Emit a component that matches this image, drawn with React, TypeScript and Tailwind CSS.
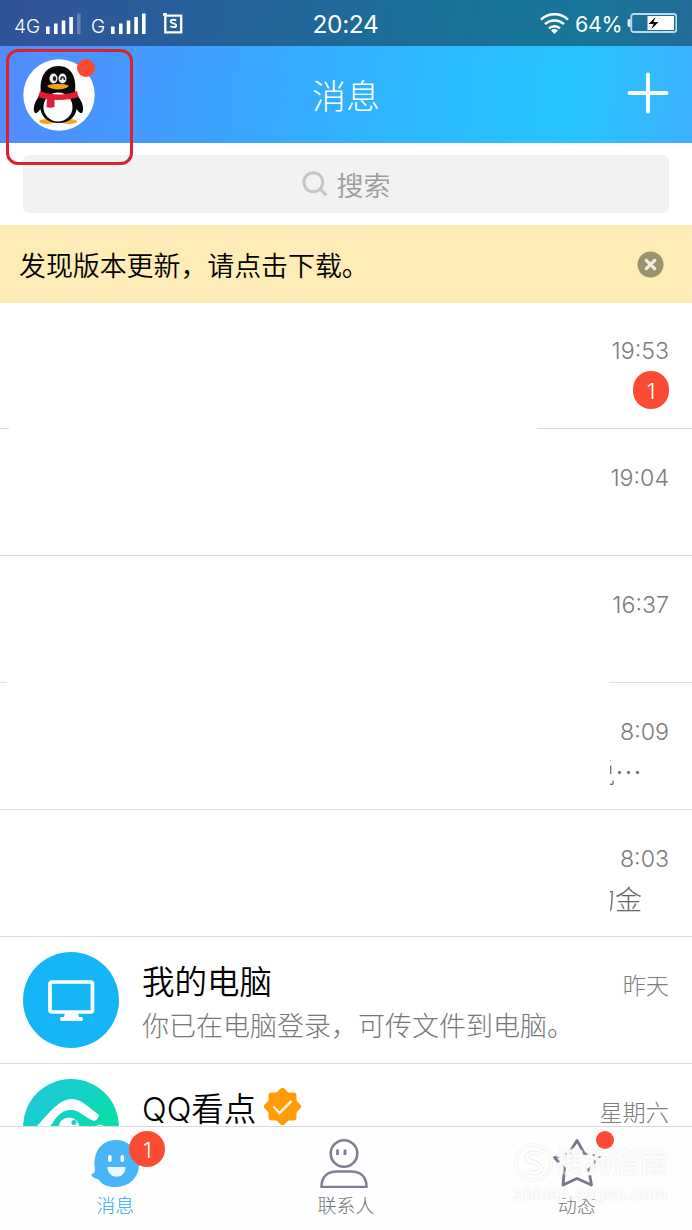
import type { ReactNode } from "react";
import clsx from "clsx";

type Chat = {
  id: string;
  time: string;
  unread?: number;
  // tail of the preview that is still readable next to the hidden part
  tail?: string;
  avatar?: ReactNode;
  title?: string;
  verified?: boolean;
  preview?: string;
  // width of the left stub and of the right stub of a broken divider
  divider?: "wide" | "narrow";
};

function SignalBars({ weak }: { weak?: boolean }) {
  return (
    <svg className="mt-[2px] h-[22px] w-[35px]" viewBox="0 0 35 22" fill="white">
      <rect x="0" y="13.5" width="3.6" height="7.5" />
      <rect x="8" y="10.5" width="3.6" height="10.5" />
      <rect x="15.7" y="7.5" width="3.6" height="13.5" />
      <rect x="23.3" y="4" width="3.6" height="17" />
      <rect x="31" y="0.5" width="3.6" height="20.5" opacity={weak ? 0.25 : 1} />
    </svg>
  );
}

function StatusBar() {
  return (
    <div className="grid h-[46px] grid-cols-[1fr_auto_1fr] items-center bg-black/40 pr-[15px] pl-[14px] leading-none text-white">
      <div className="flex items-center">
        <span className="mt-[7px] w-[32px] text-[19px] font-[350]">4G</span>
        <SignalBars weak />
        <span className="mt-[7px] ml-[10px] w-[20px] text-[19px] font-[350]">G</span>
        <SignalBars />
        <svg className="ml-[17px] h-[21px] w-[20px]" viewBox="0 0 20 21" fill="none" stroke="white">
          <path d="M0 1.5h4M2.3 0v19.3h15.9V2.6H3.5" strokeWidth="2.3" />
          <path d="M13 7.600c-1-1.200-5.300-1.300-5.300 1 0 2.400 5.500 1.200 5.500 3.800 0 2.300-4.600 2.100-5.800.6" strokeWidth="1.900" />
        </svg>
      </div>
      <span className="mt-[3px] text-[24.500px] tracking-[-0.4px]">20:24</span>
      <div className="flex items-center justify-end">
        <svg className="h-[21px] w-[29px]" viewBox="0 0 29 21" fill="none" stroke="white" strokeWidth="2.500">
          <path d="M1 6.600a19.500 19.500 0 0 1 27 0" />
          <path d="M5 11.200a13.800 13.800 0 0 1 19 0" />
          <path d="M9 15.400a8 8 0 0 1 11 0" />
          <path d="M11 17.400a5.500 5.500 0 0 1 7 0L14.500 21z" fill="white" stroke="none" />
        </svg>
        <span className="mt-[3px] ml-[6px] w-[52px] text-[21.500px] tracking-[-0.4px]">64%</span>
        <svg className="h-[20px] w-[50px]" viewBox="0 0 50 20">
          <path d="M3.500 6H2.500Q.5 6 .5 8v4Q.5 14 2.500 14h1z" fill="#dceef6" />
          <rect x="4.300" y="1" width="45" height="18" rx="2.500" fill="none" stroke="#b9dcec" strokeWidth="1.800" />
          <rect x="20.500" y="3" width="26.500" height="14" fill="white" />
          <path d="M28.500 4l-7 7h5l-2 5 7-7h-5z" fill="black" />
        </svg>
      </div>
    </div>
  );
}

function Penguin() {
  return (
    <svg className="h-[72px] w-[72px]" viewBox="0 0 72 72">
      <circle cx="36" cy="36" r="35.700" fill="white" />
      <ellipse cx="24" cy="62.500" rx="8" ry="2.500" fill="#f3a71d" />
      <ellipse cx="46" cy="62.500" rx="8" ry="2.500" fill="#f3a71d" />
      <path d="M18 35C12 41 9 50 12 54c2 1 5-3 7-6zM53 35c6 6 9 15 6 19-2 1-5-3-7-6z" fill="#080808" />
      <path d="M18 34C16 18 23 7 35.500 7S54 18 52 34l2 12C54 57 47 64 35.500 64S17 57 17 46z" fill="#080808" />
      <ellipse cx="35" cy="48" rx="14.500" ry="14.500" fill="white" />
      <ellipse cx="30.500" cy="19.500" rx="4" ry="5" fill="#eee" />
      <ellipse cx="39.500" cy="19.500" rx="4" ry="5" fill="#eee" />
      <ellipse cx="31.500" cy="19.500" rx="1.700" ry="2.600" fill="#222" />
      <path d="M37.800 21c0-4 3.600-4 3.600 0" fill="none" stroke="#222" strokeWidth="1.500" />
      <path d="M24 27c4-3 18-3 22 0-4 4.500-18 4.500-22 0z" fill="#e9a31f" />
      <path d="M17 32c11 4.500 27 4.500 37 0l1.500 6c-10 4-30 4-40.500 0z" fill="#e11c35" />
      <path d="M24 38l7.500.8V48c-3 1-6 .8-8 0z" fill="#d4203c" />
    </svg>
  );
}

function Header() {
  return (
    <div className="relative grid h-[97px] grid-cols-3 items-center px-[23px]">
      <div className="relative w-[72px]">
        <Penguin />
        <span className="absolute top-0 right-0 size-[18px] rounded-full bg-[#fa4b32]" />
      </div>
      <h1 className="mt-[4px] text-center text-[34px] leading-none font-light text-white">消息</h1>
      <svg className="-mt-[3px] h-[42px] w-[42px] justify-self-end" viewBox="0 0 42 42" stroke="white" strokeWidth="3.800" strokeLinecap="round">
        <path d="M21 2.500v37M2.500 21h37" />
      </svg>
      {/* highlight frame drawn over the avatar */}
      <div className="absolute top-[3px] left-[6px] h-[116px] w-[127px] rounded-[12px] border-3 border-[#d9222e]" />
    </div>
  );
}

function SearchBox() {
  return (
    <div className="h-[82px] bg-white px-[23px] pt-[12px]">
      <div className="flex h-[58px] items-center justify-center gap-[9px] rounded-[6px] bg-[#f2f2f2] pb-px">
        <svg className="h-[26px] w-[26px]" viewBox="0 0 26 26" fill="none" stroke="#c5c6cb" strokeWidth="2.900">
          <circle cx="11.300" cy="11.300" r="9.500" />
          <path d="M18.300 18.300l6.200 6" />
        </svg>
        <span className="mt-[6px] text-[27px] leading-none font-[350] text-[#9c9c9c]">搜索</span>
      </div>
    </div>
  );
}

function UpdateNotice() {
  return (
    <div className="flex h-[78px] items-center justify-between bg-[#fdecb5] pr-[28px] pl-[19px]">
      <p className="mt-[4px] text-[27px] leading-none font-[350] tracking-[-0.1px] text-black">发现版本更新，请点击下载。</p>
      <svg className="h-[27px] w-[27px]" viewBox="0 0 27 27">
        <circle cx="13.500" cy="13.500" r="13" fill="#9b936f" />
        <path d="M9.300 9.300l8.400 8.400M17.700 9.300l-8.400 8.400" stroke="#f3eedb" strokeWidth="3.200" strokeLinecap="round" />
      </svg>
    </div>
  );
}

function ComputerAvatar() {
  return (
    <svg className="size-[96px]" viewBox="0 0 96 96">
      <circle cx="48" cy="48" r="48" fill="#15b6f5" />
      <rect x="27" y="30" width="42.500" height="30" rx="2" fill="none" stroke="white" strokeWidth="3.700" />
      <path d="M42 61h13l1 4h3q2 2 0 4H38q-2-2 0-4h3z" fill="white" />
    </svg>
  );
}

function KandianAvatar() {
  return (
    <svg className="size-[96px]" viewBox="0 0 96 96">
      <defs>
        <linearGradient id="kandian" x1="0" y1="0" x2="1" y2="1">
          <stop offset="0.2" stopColor="#19cbd5" />
          <stop offset="0.8" stopColor="#05e39f" />
        </linearGradient>
      </defs>
      <circle cx="48" cy="48" r="48" fill="url(#kandian)" />
      <path d="M13 48C25 36 35 20 49 20c10 0 17 9 27 16q-1 5-5 6C62 39 57 31 48 31 37 31 33 39 24 52z" fill="white" />
      <circle cx="46" cy="49" r="10.500" fill="white" />
      <circle cx="51" cy="43.500" r="2.500" fill="#17cfc9" />
      <circle cx="77" cy="49.500" r="4" fill="white" />
    </svg>
  );
}

function VerifiedBadge() {
  return (
    <svg className="-mt-[5px] h-[39px] w-[39px]" viewBox="0 0 39 39">
      <g fill="#ff9c08">
        <rect x="5.500" y="5.500" width="28" height="28" rx="3" />
        <rect x="5.500" y="5.500" width="28" height="28" rx="3" transform="rotate(45 19.500 19.500)" />
      </g>
      <path d="M10.500 19.500l6 6.500 12-12" fill="none" stroke="#fff2d5" strokeWidth="2.500" />
    </svg>
  );
}

const chats: Chat[] = [
  { id: "a", time: "19:53", unread: 1, divider: "wide" },
  { id: "b", time: "19:04" },
  { id: "c", time: "16:37", divider: "narrow" },
  { id: "d", time: "8:09", tail: "说…" },
  { id: "e", time: "8:03", tail: "的金" },
  {
    id: "pc",
    time: "昨天",
    avatar: <ComputerAvatar />,
    title: "我的电脑",
    preview: "你已在电脑登录，可传文件到电脑。",
  },
  { id: "kandian", time: "星期六", avatar: <KandianAvatar />, title: "QQ看点", verified: true },
];

function Divider({ kind }: { kind?: Chat["divider"] }) {
  if (!kind) return <div className="h-px bg-[#dedede]" />;
  return (
    <div className="flex h-px justify-between">
      <span className={clsx("bg-[#dedede]", kind === "wide" ? "w-[9px]" : "w-[7px]")} />
      <span className={clsx("bg-[#dedede]", kind === "wide" ? "w-[155px]" : "w-[83px]")} />
    </div>
  );
}

function ChatRow({ chat }: { chat: Chat }) {
  return (
    <div className="flex h-[127px] shrink-0 flex-col">
      <div className="flex flex-1 pr-[23px] pl-[23px]">
        {chat.avatar && <div className="mt-[15px] mr-[23px]">{chat.avatar}</div>}
        <div className="flex-1 pt-[25px]">
          {chat.title && (
            <div className="flex h-[40px] items-center gap-[7px]">
              <span className="mt-[2px] text-[32.500px] leading-none font-[350] text-black">{chat.title}</span>
              {chat.verified && <VerifiedBadge />}
            </div>
          )}
          {chat.preview && (
            <p className="mt-[11px] text-[27px] leading-none font-light whitespace-nowrap text-[#777]">{chat.preview}</p>
          )}
        </div>
        <div className="flex flex-col items-end pt-[37px]">
          <time className="text-[23.200px] leading-[24px] font-light whitespace-nowrap text-[#7c7c7c]">{chat.time}</time>
          {chat.unread && (
            <span className="mt-[8px] flex h-[38px] w-[36px] items-center justify-center rounded-full bg-[#fb4b32] pt-[2px] text-[22px] leading-none font-light text-white">
              {chat.unread}
            </span>
          )}
          {chat.tail && (
            <span className="mt-[12px] mr-[27px] flex w-[32px] justify-end overflow-hidden font-['Noto_Sans_CJK_SC',sans-serif] text-[27px] leading-[32px] font-light whitespace-nowrap text-[#666]">
              {chat.tail}
            </span>
          )}
        </div>
      </div>
      <Divider kind={chat.divider} />
    </div>
  );
}

function MessageIcon() {
  return (
    <svg className="h-[50px] w-[50px]" viewBox="0 0 50 50">
      <path d="M26 2C12 2 4 13 4.500 27C5 32 6 35 1 36.500C3 40 6 41 8 41C12 47 18 49 25 49C40 49 49 39 49 26S39 2 26 2z" fill="#48b5f8" />
      <rect x="18" y="17" width="3.600" height="7" rx="1.800" fill="white" />
      <rect x="30.500" y="17" width="3.600" height="7" rx="1.800" fill="white" />
      <path d="M17.500 29h18c0 13-18 13-18 0z" fill="#eef9ff" />
    </svg>
  );
}

function ContactIcon() {
  return (
    <svg className="-ml-[4px] h-[50px] w-[50px]" viewBox="0 0 50 50" fill="none" stroke="#7e8090" strokeWidth="2.600">
      <circle cx="25" cy="15.500" r="13.300" />
      <path d="M2.500 49C2.500 38 9 33.500 18 33.500H32C41 33.500 47.500 38 47.500 49z" strokeLinejoin="round" />
      <path d="M18.500 11.500v5.500M26 11.500v5.500" strokeWidth="2.800" />
    </svg>
  );
}

function StarIcon() {
  return (
    <svg className="h-[50px] w-[50px]" viewBox="0 0 50 50" fill="none" stroke="#777989" strokeWidth="2.800" strokeLinejoin="round">
      <path d="M25 2.500l7.400 13L47.500 18.500 36.500 30.500 39.500 47 25 40.500 11 47l1.500-16.500L2.500 19.500l14-3.500z" />
    </svg>
  );
}

const tabs = [
  { label: "消息", icon: <MessageIcon />, active: true, badge: 1 },
  { label: "联系人", icon: <ContactIcon /> },
  { label: "动态", icon: <StarIcon />, dot: true },
];

function Watermark() {
  return (
    <div className="absolute top-[16px] left-[514px] w-[156px] text-white/85 [text-shadow:0_0_2px_#e2e2e2]">
      <div className="flex items-center gap-[3px]">
        <svg className="h-[39px] w-[39px]" viewBox="0 0 39 39" fill="none">
          <circle cx="19.500" cy="19.500" r="17.500" stroke="#f0f0f0" strokeWidth="3.500" />
          <circle cx="19.500" cy="19.500" r="17.500" stroke="white" strokeWidth="1.800" />
          <path d="M27 12c-3-3-14-3-14 2.500S27 19 27 25s-11 6-15 2" stroke="#f0f0f0" strokeWidth="5" />
          <path d="M27 12c-3-3-14-3-14 2.500S27 19 27 25s-11 6-15 2" stroke="white" strokeWidth="2.800" />
        </svg>
        <span className="text-[28px] leading-none font-bold">搜狗指南</span>
      </div>
      <p className="mt-[4px] text-[16.800px] leading-none font-bold">zhinan.sogou.com</p>
    </div>
  );
}

function TabBar() {
  return (
    <nav className="relative flex h-[104px] shrink-0 border-t border-[#d9d9de] bg-[#fefefe]">
      {tabs.map((tab) => (
        <div key={tab.label} className="flex flex-1 flex-col items-center pt-[11px]">
          <div className="relative">
            {tab.icon}
            {tab.badge && (
              <span className="absolute -top-[7px] left-[39px] flex size-[36px] items-center justify-center rounded-full bg-[#fb4b32] pt-px text-[22px] leading-none font-light text-white">
                {tab.badge}
              </span>
            )}
            {tab.dot && <span className="absolute -top-[7px] left-[44px] size-[18px] rounded-full bg-[#fb4b32]" />}
          </div>
          <span
            className={clsx(
              "mt-[9px] text-[19px] leading-none font-light",
              tab.active ? "text-[#2ea8f4]" : "text-[#777]"
            )}
          >
            {tab.label}
          </span>
        </div>
      ))}
      <Watermark />
    </nav>
  );
}

export default function App() {
  return (
    <div className="flex h-[1230px] w-[692px] flex-col overflow-hidden bg-white font-[Inter,'Noto_Sans_CJK_SC',sans-serif]">
      <div className="relative z-10 bg-[linear-gradient(97deg,#548aff_0%,#3ca2ff_32%,#2cbaff_62%,#27c5ff_83%,#3eb1ff_100%)]">
        <StatusBar />
        <Header />
      </div>
      <SearchBox />
      <UpdateNotice />
      {/* the list starts under the last pixel of the notice */}
      <div className="-mt-px flex min-h-0 flex-1 flex-col overflow-hidden">
        {chats.map((chat) => (
          <ChatRow key={chat.id} chat={chat} />
        ))}
      </div>
      <TabBar />
    </div>
  );
}
